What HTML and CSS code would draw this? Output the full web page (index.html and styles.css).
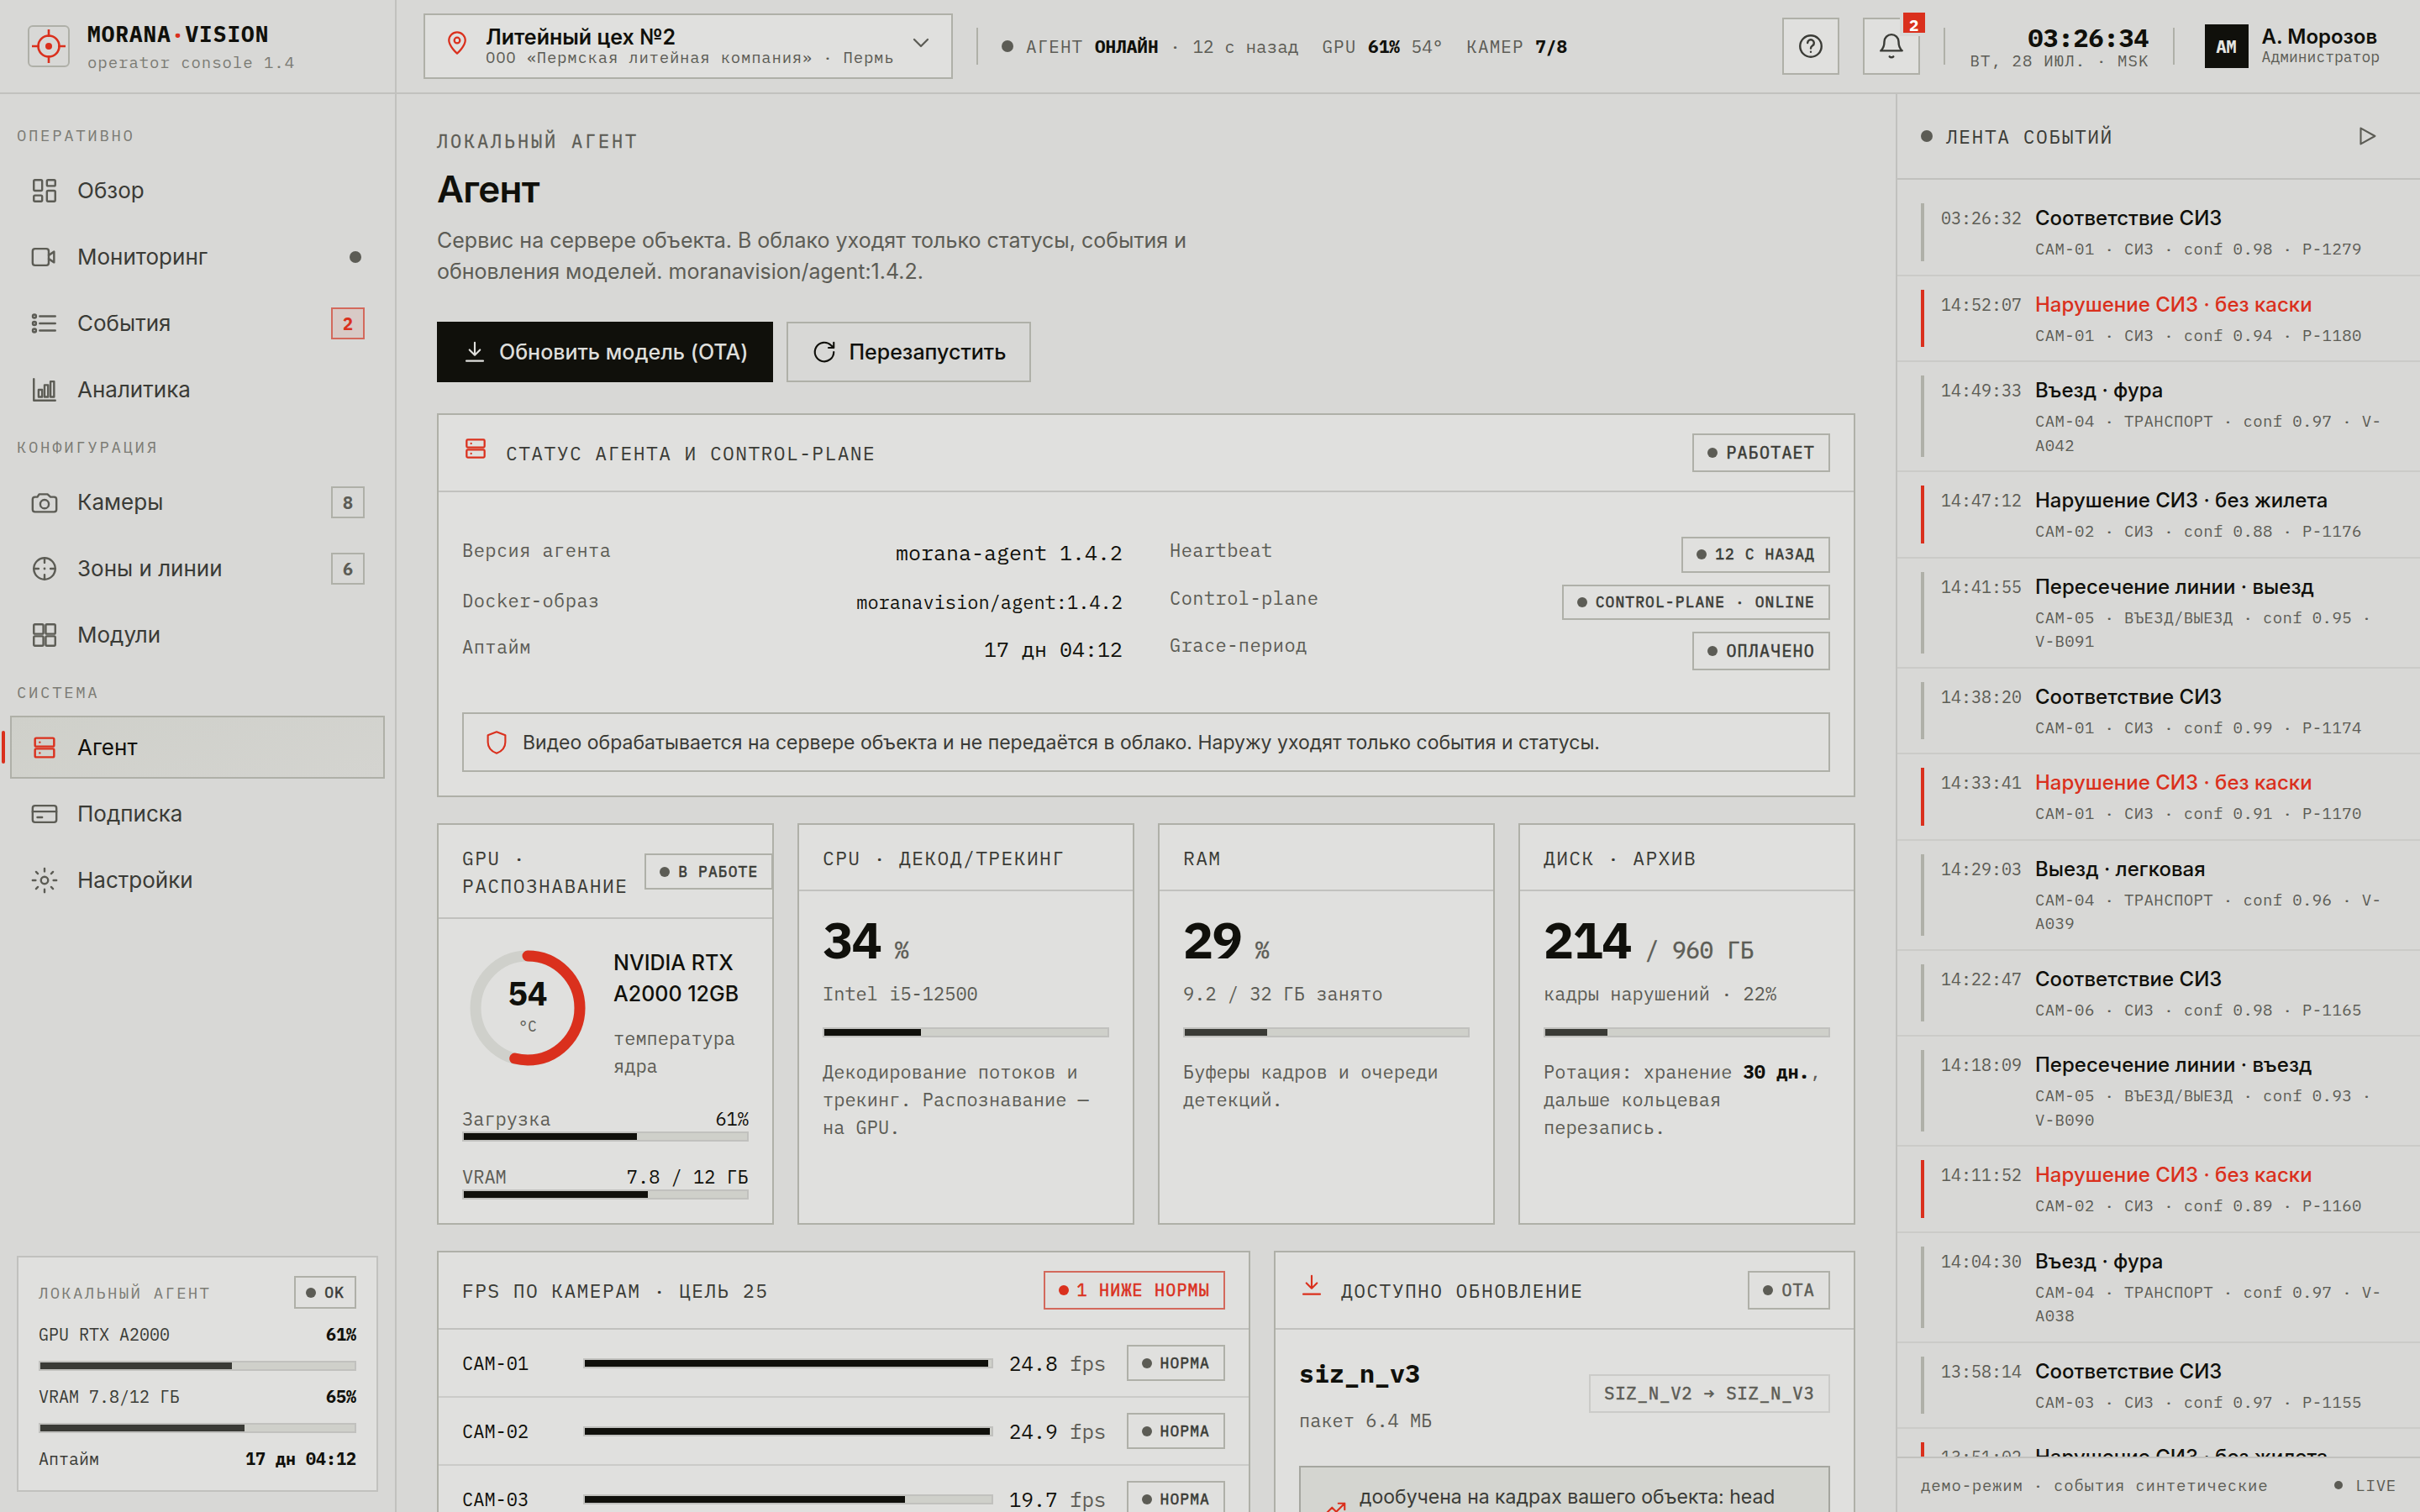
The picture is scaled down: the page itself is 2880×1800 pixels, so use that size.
FILE: index.html
```html
<!DOCTYPE html>
<html lang="ru">
<head>
<meta charset="utf-8">
<title>Morana Vision — Агент</title>
<link rel="stylesheet" href="styles.css">
</head>
<body>
<svg class="sprite" aria-hidden="true">
  <symbol id="i-dash" viewBox="0 0 24 24"><rect x="3" y="3" width="7" height="9" rx="1"/><rect x="14" y="3" width="7" height="5" rx="1"/><rect x="14" y="12" width="7" height="9" rx="1"/><rect x="3" y="16" width="7" height="5" rx="1"/></symbol>
  <symbol id="i-video" viewBox="0 0 24 24"><rect x="2" y="5" width="13.5" height="14" rx="2"/><path d="M15.5 10.5l4.5-3v9l-4.500-3"/></symbol>
  <symbol id="i-list" viewBox="0 0 24 24"><circle cx="3.500" cy="6" r="1.400"/><circle cx="3.500" cy="12" r="1.400"/><circle cx="3.500" cy="18" r="1.400"/><path d="M8 6h13M8 12h13M8 18h13"/></symbol>
  <symbol id="i-chart" viewBox="0 0 24 24"><path d="M3 3v18h18"/><rect x="7" y="12" width="3" height="6"/><rect x="12" y="8" width="3" height="10"/><rect x="17" y="5" width="3" height="13"/></symbol>
  <symbol id="i-camera" viewBox="0 0 24 24"><path d="M4 7.500h2L7.500 5.200h7L17 7.500h3a2 2 0 0 1 2 2V18a2 2 0 0 1-2 2H4a2 2 0 0 1-2-2V9.500a2 2 0 0 1 2-2z"/><circle cx="12" cy="13.500" r="3.600"/></symbol>
  <symbol id="i-target" viewBox="0 0 24 24"><circle cx="12" cy="12" r="9"/><path d="M12 3v4M12 17v4M3 12h4M17 12h4"/><circle class="fill" cx="12" cy="12" r="1"/></symbol>
  <symbol id="i-modules" viewBox="0 0 24 24"><rect x="3" y="3" width="8" height="8" rx="1"/><rect x="13" y="3" width="8" height="8" rx="1"/><rect x="3" y="13" width="8" height="8" rx="1"/><rect x="13" y="13" width="8" height="8" rx="1"/></symbol>
  <symbol id="i-server" viewBox="0 0 24 24"><rect x="4" y="4" width="16" height="7" rx="1"/><rect x="4" y="13" width="16" height="7" rx="1"/><path d="M8 7.500h.01M8 16.500h.01"/></symbol>
  <symbol id="i-card" viewBox="0 0 24 24"><rect x="2" y="5" width="20" height="14" rx="2"/><path d="M2 10h20M6 14.800h4"/></symbol>
  <symbol id="i-gear" viewBox="0 0 24 24"><circle cx="12" cy="12" r="3"/><path d="M12 2v2.500M12 19.500V22M2 12h2.500M19.500 12H22M4.900 4.900l1.500 1.500M17.600 17.600l1.500 1.500M4.900 19.100l1.500-1.500M17.600 6.400l1.500-1.500"/></symbol>
  <symbol id="i-pin" viewBox="0 0 24 24"><path d="M12 21.500s7.300-6.500 7.300-11.700a7.300 7.300 0 0 0-14.600 0c0 5.200 7.300 11.700 7.300 11.700z"/><circle cx="12" cy="9.800" r="2.500"/></symbol>
  <symbol id="i-chev" viewBox="0 0 24 24"><path d="M6 9l6 6 6-6"/></symbol>
  <symbol id="i-help" viewBox="0 0 24 24"><circle cx="12" cy="12" r="9"/><path d="M9.300 9.200a2.700 2.700 0 1 1 4.200 2.300c-1 .7-1.500 1.200-1.500 2.300M12 16.800h.01"/></symbol>
  <symbol id="i-bell" viewBox="0 0 24 24"><path d="M6 8.200a6 6 0 0 1 12 0c0 4.800 1.300 6.300 3 7.600H3c1.700-1.300 3-2.800 3-7.600z"/><path d="M10.400 20.700c.8.9 2.400.9 3.200 0"/></symbol>
  <symbol id="i-download" viewBox="0 0 24 24"><path d="M12 3v12M7 10l5 5 5-5M4 20.500h16"/></symbol>
  <symbol id="i-refresh" viewBox="0 0 24 24"><path d="M21 12a9 9 0 1 1-2.600-6.300L21 8M21 3v5h-5"/></symbol>
  <symbol id="i-shield" viewBox="0 0 24 24"><path d="M12 1.800l8.300 3.200v6.500c0 5-3.300 8.700-8.300 10.700-5-2-8.300-5.700-8.300-10.700V5z"/></symbol>
  <symbol id="i-play" viewBox="0 0 24 24"><path d="M6 4.500l13.500 7.500L6 19.500z"/></symbol>
  <symbol id="i-trend" viewBox="0 0 24 24"><path d="M3 17l6-6 4 4 8-8M15 7h6v6"/></symbol>
</svg>

<div class="app">
  <div class="brand">
    <svg class="logo" viewBox="0 0 52 52"><rect x="2" y="2" width="48" height="48" rx="5"/><circle class="red" cx="26" cy="26" r="12.500"/><path class="red" d="M26 6v9M26 37v9M6 26h9M37 26h9"/><circle class="core" cx="26" cy="26" r="4"/></svg>
    <div>
      <div class="brand-name">MORANA<span>·</span>VISION</div>
      <div class="brand-sub">operator console 1.4</div>
    </div>
  </div>

  <header class="topbar">
    <div class="site">
      <svg class="icon pin"><use href="#i-pin"/></svg>
      <div>
        <div class="site-name">Литейный цех №2</div>
        <div class="site-org">ООО «Пермская литейная компания» · Пермь</div>
      </div>
      <svg class="icon chev"><use href="#i-chev"/></svg>
    </div>
    <i class="vline"></i>
    <div class="health">
      <i class="dot dot-l"></i>
      <div class="stat">АГЕНТ <b>ОНЛАЙН</b> · <em>12 с назад</em></div>
      <div class="stat">GPU <b>61%</b> <em>54°</em></div>
      <div class="stat">КАМЕР <b>7/8</b></div>
    </div>
    <div class="top-right">
      <div class="iconbtn"><svg class="icon"><use href="#i-help"/></svg></div>
      <div class="iconbtn"><svg class="icon"><use href="#i-bell"/></svg><span class="count">2</span></div>
      <i class="vline"></i>
      <div class="clock"><div class="time">03:26:34</div><div class="date">ВТ, 28 ИЮЛ. · MSK</div></div>
      <i class="vline"></i>
      <div class="user">
        <div class="avatar">AM</div>
        <div><div class="user-name">А. Морозов</div><div class="user-role">Администратор</div></div>
      </div>
    </div>
  </header>

  <aside class="sidebar">
    <nav class="nav">
      <div class="nav-label">ОПЕРАТИВНО</div>
      <div class="nav-item"><svg class="icon"><use href="#i-dash"/></svg>Обзор</div>
      <div class="nav-item"><svg class="icon"><use href="#i-video"/></svg>Мониторинг<i class="dot dot-l end"></i></div>
      <div class="nav-item"><svg class="icon"><use href="#i-list"/></svg>События<span class="badge red">2</span></div>
      <div class="nav-item"><svg class="icon"><use href="#i-chart"/></svg>Аналитика</div>
      <div class="nav-label">КОНФИГУРАЦИЯ</div>
      <div class="nav-item"><svg class="icon"><use href="#i-camera"/></svg>Камеры<span class="badge">8</span></div>
      <div class="nav-item"><svg class="icon"><use href="#i-target"/></svg>Зоны и линии<span class="badge">6</span></div>
      <div class="nav-item"><svg class="icon"><use href="#i-modules"/></svg>Модули</div>
      <div class="nav-label">СИСТЕМА</div>
      <div class="nav-item active"><svg class="icon"><use href="#i-server"/></svg>Агент</div>
      <div class="nav-item"><svg class="icon"><use href="#i-card"/></svg>Подписка</div>
      <div class="nav-item"><svg class="icon"><use href="#i-gear"/></svg>Настройки</div>
    </nav>
    <div class="mini">
      <div class="mini-head"><span>ЛОКАЛЬНЫЙ АГЕНТ</span><span class="tag tag-xs"><i class="dot"></i>OK</span></div>
      <div class="mini-row"><span>GPU RTX A2000</span><b>61%</b></div>
      <div class="bar soft"><i style="width:61%"></i></div>
      <div class="mini-row"><span>VRAM 7.8/12 ГБ</span><b>65%</b></div>
      <div class="bar soft"><i style="width:65%"></i></div>
      <div class="mini-row"><span>Аптайм</span><b>17 дн 04:12</b></div>
    </div>
  </aside>

  <main class="main">
    <div class="eyebrow">ЛОКАЛЬНЫЙ АГЕНТ</div>
    <h1>Агент</h1>
    <p class="lead">Сервис на сервере объекта. В облако уходят только статусы, события и<br>обновления моделей. moranavision/agent:1.4.2.</p>
    <div class="actions">
      <div class="btn primary"><svg class="icon"><use href="#i-download"/></svg>Обновить модель (OTA)</div>
      <div class="btn"><svg class="icon"><use href="#i-refresh"/></svg>Перезапустить</div>
    </div>

    <section class="card">
      <div class="card-head">
        <svg class="icon head-server"><use href="#i-server"/></svg>
        <div class="title">СТАТУС АГЕНТА И CONTROL-PLANE</div>
        <span class="tag"><i class="dot"></i>РАБОТАЕТ</span>
      </div>
      <div class="status">
        <dl>
          <div class="kv r1"><dt>Версия агента</dt><dd>morana-agent 1.4.2</dd></div>
          <div class="kv r2"><dt>Docker-образ</dt><dd class="small">moranavision/agent:1.4.2</dd></div>
          <div class="kv r3"><dt>Аптайм</dt><dd>17 дн 04:12</dd></div>
        </dl>
        <dl>
          <div class="kv"><dt>Heartbeat</dt><dd><span class="tag tag-sm"><i class="dot"></i>12 С НАЗАД</span></dd></div>
          <div class="kv"><dt>Control-plane</dt><dd><span class="tag tag-sm"><i class="dot"></i>CONTROL-PLANE · ONLINE</span></dd></div>
          <div class="kv"><dt>Grace-период</dt><dd><span class="tag"><i class="dot"></i>ОПЛАЧЕНО</span></dd></div>
        </dl>
      </div>
      <div class="notice"><svg class="icon"><use href="#i-shield"/></svg>Видео обрабатывается на сервере объекта и не передаётся в облако. Наружу уходят только события и статусы.</div>
    </section>

    <div class="metrics">
      <section class="card">
        <div class="card-head low"><div class="title">GPU · РАСПОЗНАВАНИЕ</div><span class="tag tag-sm"><i class="dot"></i>В РАБОТЕ</span></div>
        <div class="card-body">
          <div class="gpu">
            <div class="gauge">
              <svg viewBox="0 0 156 156"><circle class="ring" cx="78" cy="78" r="62"/><circle class="arc" cx="78" cy="78" r="62" pathLength="100" stroke-dasharray="54 100" transform="rotate(-90 78 78)"/></svg>
              <div class="gauge-text"><b>54</b><span>°C</span></div>
            </div>
            <div class="gpu-info"><div class="gpu-name">NVIDIA RTX A2000 12GB</div><div class="sub">температура ядра</div></div>
          </div>
          <div class="meter"><span>Загрузка</span><b>61%</b></div>
          <div class="bar"><i style="width:61%"></i></div>
          <div class="meter second"><span>VRAM</span><b>7.8 / 12 ГБ</b></div>
          <div class="bar"><i style="width:65%"></i></div>
        </div>
      </section>
      <section class="card">
        <div class="card-head low"><div class="title">CPU · ДЕКОД/ТРЕКИНГ</div></div>
        <div class="card-body">
          <div class="num">34<span> %</span></div>
          <div class="sub">Intel i5-12500</div>
          <div class="bar"><i style="width:34%"></i></div>
          <div class="sub note">Декодирование потоков и трекинг. Распознавание — на GPU.</div>
        </div>
      </section>
      <section class="card">
        <div class="card-head low"><div class="title">RAM</div></div>
        <div class="card-body">
          <div class="num">29<span> %</span></div>
          <div class="sub">9.2 / 32 ГБ занято</div>
          <div class="bar soft"><i style="width:29%"></i></div>
          <div class="sub note">Буферы кадров и очереди детекций.</div>
        </div>
      </section>
      <section class="card">
        <div class="card-head low"><div class="title">ДИСК · АРХИВ</div></div>
        <div class="card-body">
          <div class="num">214<span> / 960 ГБ</span></div>
          <div class="sub">кадры нарушений · 22%</div>
          <div class="bar soft"><i style="width:22%"></i></div>
          <div class="sub note">Ротация: хранение <b>30 дн.</b>, дальше кольцевая перезапись.</div>
        </div>
      </section>
    </div>

    <div class="bottom">
      <section class="card">
        <div class="card-head"><div class="title">FPS ПО КАМЕРАМ · ЦЕЛЬ 25</div><span class="tag alert"><i class="dot"></i>1 НИЖЕ НОРМЫ</span></div>
        <div class="fps"><span>CAM-01</span><div class="bar"><i style="width:99.200%"></i></div><div class="val">24.8 <em>fps</em></div><span class="tag tag-sm"><i class="dot"></i>НОРМА</span></div>
        <div class="fps"><span>CAM-02</span><div class="bar"><i style="width:99.600%"></i></div><div class="val">24.9 <em>fps</em></div><span class="tag tag-sm"><i class="dot"></i>НОРМА</span></div>
        <div class="fps"><span>CAM-03</span><div class="bar"><i style="width:78.800%"></i></div><div class="val">19.7 <em>fps</em></div><span class="tag tag-sm"><i class="dot"></i>НОРМА</span></div>
      </section>
      <section class="card">
        <div class="card-head"><svg class="icon head-dl"><use href="#i-download"/></svg><div class="title">ДОСТУПНО ОБНОВЛЕНИЕ</div><span class="tag muted"><i class="dot"></i>OTA</span></div>
        <div class="card-body">
          <div class="update">
            <div><div class="model">siz_n_v3</div><div class="sub">пакет 6.4 МБ</div></div>
            <span class="tag ghost">SIZ_N_V2 → SIZ_N_V3</span>
          </div>
          <div class="hint"><svg class="icon"><use href="#i-trend"/></svg><div>дообучена на кадрах вашего объекта: head</div></div>
        </div>
      </section>
    </div>
  </main>

  <aside class="feed">
    <div class="feed-head"><i class="dot dot-l"></i><div class="title">ЛЕНТА СОБЫТИЙ</div><div class="play"><svg class="icon"><use href="#i-play"/></svg></div></div>
    <div class="events">
      <div class="ev"><i></i><time>03:26:32</time><div><h4>Соответствие СИЗ</h4><p>CAM-01 · СИЗ · conf 0.98 · P-1279</p></div></div>
      <div class="ev bad hot"><i></i><time>14:52:07</time><div><h4>Нарушение СИЗ · без каски</h4><p>CAM-01 · СИЗ · conf 0.94 · P-1180</p></div></div>
      <div class="ev"><i></i><time>14:49:33</time><div><h4>Въезд · фура</h4><p>CAM-04 · ТРАНСПОРТ · conf 0.97 · V-A042</p></div></div>
      <div class="ev bad"><i></i><time>14:47:12</time><div><h4>Нарушение СИЗ · без жилета</h4><p>CAM-02 · СИЗ · conf 0.88 · P-1176</p></div></div>
      <div class="ev"><i></i><time>14:41:55</time><div><h4>Пересечение линии · выезд</h4><p>CAM-05 · ВЪЕЗД/ВЫЕЗД · conf 0.95 · <span>V-B091</span></p></div></div>
      <div class="ev"><i></i><time>14:38:20</time><div><h4>Соответствие СИЗ</h4><p>CAM-01 · СИЗ · conf 0.99 · P-1174</p></div></div>
      <div class="ev bad hot"><i></i><time>14:33:41</time><div><h4>Нарушение СИЗ · без каски</h4><p>CAM-01 · СИЗ · conf 0.91 · P-1170</p></div></div>
      <div class="ev"><i></i><time>14:29:03</time><div><h4>Выезд · легковая</h4><p>CAM-04 · ТРАНСПОРТ · conf 0.96 · V-A039</p></div></div>
      <div class="ev"><i></i><time>14:22:47</time><div><h4>Соответствие СИЗ</h4><p>CAM-06 · СИЗ · conf 0.98 · P-1165</p></div></div>
      <div class="ev"><i></i><time>14:18:09</time><div><h4>Пересечение линии · въезд</h4><p>CAM-05 · ВЪЕЗД/ВЫЕЗД · conf 0.93 · <span>V-B090</span></p></div></div>
      <div class="ev bad hot"><i></i><time>14:11:52</time><div><h4>Нарушение СИЗ · без каски</h4><p>CAM-02 · СИЗ · conf 0.89 · P-1160</p></div></div>
      <div class="ev"><i></i><time>14:04:30</time><div><h4>Въезд · фура</h4><p>CAM-04 · ТРАНСПОРТ · conf 0.97 · V-A038</p></div></div>
      <div class="ev"><i></i><time>13:58:14</time><div><h4>Соответствие СИЗ</h4><p>CAM-03 · СИЗ · conf 0.97 · P-1155</p></div></div>
      <div class="ev bad"><i></i><time>13:51:02</time><div><h4>Нарушение СИЗ · без жилета</h4></div></div>
    </div>
    <div class="feed-foot"><span>демо-режим · события синтетические</span><i class="dot"></i><span class="live">LIVE</span></div>
  </aside>
</div>
</body>
</html>
```
FILE: styles.css
```css
:root {
  --bg: #d8d8d6;
  --surface: #e0e0de;
  --line: #c1c1be;
  --line-soft: #cbcbc8;
  --edge: #afb0a8;
  --ink: #10100b;
  --ink-2: #3a3b36;
  --ink-3: #5c5c55;
  --ink-4: #7b7b74;
  --red: #da301d;
  --mono: "IBM Plex Mono", "Liberation Mono", monospace;
  --sans: Inter, "Liberation Sans", sans-serif;
}
* { box-sizing: border-box; margin: 0; padding: 0; }
i, em { font-style: normal; }
body { width: 2880px; height: 1800px; overflow: hidden; background: var(--bg); color: var(--ink); font-family: var(--sans); }
.sprite { display: none; }

.app { display: grid; grid-template-columns: 472px 1784px 624px; grid-template-rows: 112px 1688px; }

.icon { width: 34px; height: 34px; flex: none; fill: none; stroke: currentColor; stroke-width: 1.7; stroke-linecap: round; stroke-linejoin: round; }
.fill { fill: currentColor; stroke: none; }
.dot { width: 12px; height: 12px; border-radius: 50%; background: var(--ink-3); flex: none; }
.dot-l { width: 14px; height: 14px; }
.vline { width: 2px; height: 44px; background: var(--edge); flex: none; }

/* brand */
.brand { display: flex; align-items: center; gap: 20px; padding-left: 32px; border-right: 2px solid var(--line); border-bottom: 2px solid var(--line); }
.logo { width: 52px; height: 52px; flex: none; fill: none; stroke-width: 2; stroke: var(--edge); }
.logo .red { stroke: var(--red); stroke-width: 2.6; }
.logo .core { fill: var(--red); stroke: none; }
.brand-name { font: 700 26px/34px var(--mono); letter-spacing: 1.04px; padding-top: 1px; }
.brand-name span { color: var(--red); }
.brand-sub { font: 19px/28px var(--mono); letter-spacing: .95px; color: var(--ink-4); padding-top: 3px; }

/* top bar */
.topbar { grid-column: 2 / 4; display: flex; align-items: center; gap: 28px; padding: 0 48px 0 32px; border-bottom: 2px solid var(--line); }
.site { display: flex; align-items: center; width: 630px; height: 78px; padding: 0 20px 0 22px; border: 2px solid var(--edge); background: var(--surface); }
.pin { width: 32px; height: 32px; margin: 0 18px 8px 0; color: var(--red); }
.site-name { font-weight: 600; font-size: 25px; line-height: 32px; }
.site-org { margin: -3px 0 3px; font: 19px/22px var(--mono); letter-spacing: .76px; color: var(--ink-3); white-space: nowrap; }
.chev { width: 32px; height: 32px; margin: 0 0 8px auto; color: var(--ink-3); }
.health { display: flex; align-items: center; gap: 28px; }
.health .dot { margin-right: -13px; }
.stat { font: 21px/30px var(--mono); letter-spacing: 1.05px; color: var(--ink-3); white-space: nowrap; }
.stat b { letter-spacing: 0; color: var(--ink); }
.stat em { letter-spacing: 0; }
.top-right { display: flex; align-items: center; gap: 28px; margin-left: auto; }
.iconbtn { position: relative; width: 68px; height: 68px; display: grid; place-items: center; border: 2px solid var(--edge); background: var(--surface); color: var(--ink-2); }
.count { position: absolute; top: -12px; right: -12px; width: 34px; height: 32px; border: 4px solid var(--bg); background: var(--red); color: #fff; font: 700 19px/30px var(--mono); text-align: center; }
.clock { width: 215px; text-align: right; padding-top: 1px; }
.time { font: 700 30px/32px var(--mono); padding-top: 1px; }
.date { font: 19px/22px var(--mono); letter-spacing: 1.14px; color: var(--ink-3); }
.user { display: flex; align-items: center; gap: 16px; margin-left: 8px; }
.avatar { width: 52px; height: 52px; background: var(--ink); color: #e6e6e2; font: 700 20px/54px var(--mono); text-align: center; }
.user-name { font-weight: 600; font-size: 24px; line-height: 30px; }
.user-role { margin: -2px 0 2px; font: 18px/22px var(--mono); color: var(--ink-3); }

/* sidebar */
.sidebar { display: flex; flex-direction: column; justify-content: space-between; border-right: 2px solid var(--line); padding-bottom: 24px; }
.nav { display: flex; flex-direction: column; gap: 4px; padding: 22px 12px 0; }
.nav-label { height: 51px; padding: 8px 8px 0; font: 19px/38px var(--mono); letter-spacing: 2.66px; color: var(--ink-4); }
.nav-item { display: flex; align-items: center; gap: 22px; height: 75px; padding: 0 22px; border: 2px solid transparent; font-size: 26px; color: var(--ink-2); }
.nav-item .icon { color: var(--ink-3); }
.nav-item.active { position: relative; color: var(--ink); border-color: var(--edge); background: linear-gradient(160deg, #cfd0ca, #d4d4d0); }
.nav-item.active .icon { color: var(--red); }
.nav-item.active::before { content: ""; position: absolute; left: -12px; top: 16px; width: 4px; height: 39px; border-radius: 2px; background: var(--red); }
.end { margin: 0 4px 0 auto; }
.badge { margin-left: auto; width: 40px; height: 38px; border: 2px solid var(--edge); font: 700 20px/35px var(--mono); text-align: center; color: var(--ink-3); }
.badge.red { border-color: #d3695c; background: #d8cac6; color: var(--red); }

.mini { display: flex; flex-direction: column; gap: 18px; margin: 0 20px; padding: 22px 24px 24px; border: 2px solid var(--line); background: var(--surface); }
.mini-head { display: flex; align-items: center; justify-content: space-between; font: 19px/24px var(--mono); letter-spacing: 2.28px; color: var(--ink-4); }
.mini-row { display: flex; justify-content: space-between; font: 20px/26px var(--mono); color: var(--ink-2); }
.mini-row b { color: var(--ink); }

.bar { height: 12px; border: 2px solid var(--line); background: #cfd0ca; }
.bar i { display: block; height: 8px; background: var(--ink); }
.bar.soft i { background: var(--ink-2); }

.tag { display: inline-flex; align-items: center; gap: 10px; flex: none; height: 46px; padding: 0 16px; border: 2px solid var(--edge); font: 20px/24px var(--mono); -webkit-text-stroke: .6px currentColor; letter-spacing: 1.2px; color: var(--ink-2); white-space: nowrap; }
.tag-sm { height: 42.500px; font-size: 18px; letter-spacing: 1.08px; }
.tag-xs { height: 39px; padding: 0 12px; font-size: 18px; letter-spacing: 1.08px; }
.tag.alert { color: var(--red); border-color: #d3695c; }
.tag.alert .dot { background: var(--red); }
.tag.muted { color: var(--ink-3); }
.tag.ghost { color: var(--ink-3); border-color: var(--line-soft); }

/* main */
.main { height: 1688px; overflow: hidden; padding: 38px 48px 0; }
.eyebrow { font: 22px/36px var(--mono); letter-spacing: 2.8px; color: var(--ink-3); -webkit-text-stroke: .3px currentColor; }
h1 { margin-top: 11px; font-weight: 600; font-size: 44px; line-height: 56px; letter-spacing: -.75px; }
.lead { margin-top: 15px; font-size: 25px; line-height: 36.800px; color: var(--ink-3); }
.actions { display: flex; gap: 16px; margin: 41px 0 37px; }
.btn { display: flex; align-items: center; gap: 14px; height: 72.500px; padding: 0 28px; border: 2px solid var(--edge); font-weight: 500; font-size: 25px; white-space: nowrap; }
.btn .icon { width: 30px; height: 30px; }
.btn.primary { background: var(--ink); border-color: var(--ink); color: #dededb; }

.card { border: 2px solid var(--edge); background: var(--surface); min-width: 0; }
.card-head { display: flex; align-items: center; gap: 20px; padding: 22px 28px; min-height: 92px; border-bottom: 2px solid var(--line); }
.card-head .tag { margin-left: auto; }
.card-head.low { min-height: 79px; padding-bottom: 21px; }
.title { font: 23px/33px var(--mono); letter-spacing: 1.38px; color: var(--ink-2); padding-top: 1px; }
.head-server { width: 32px; height: 32px; margin-bottom: 10px; color: var(--red); }
.head-dl { width: 30px; height: 30px; margin-bottom: 12px; color: var(--red); }
.card-body { padding: 28px; }

.status { display: grid; grid-template-columns: 1fr 1fr; gap: 56px; padding: 53px 28px 50px; }
dl { display: flex; flex-direction: column; gap: 14px; }
.kv { display: flex; justify-content: space-between; align-items: flex-start; }
dt { font: 22px/32px var(--mono); letter-spacing: .44px; color: var(--ink-3); }
dd { display: flex; font: 25px/38px var(--mono); }
dd.small { font-size: 22px; line-height: 35px; }
.r1 { height: 46px; }
.r2 { height: 41px; }
.notice { display: flex; align-items: center; gap: 16px; height: 71px; margin: 0 28px 28px; padding: 0 24px; border: 2px solid var(--edge); font-size: 23px; color: var(--ink-2); white-space: nowrap; }
.notice .icon { width: 30px; height: 30px; color: var(--red); }

.metrics { display: grid; grid-template-columns: repeat(4, 401px); gap: 28px; margin: 31px 0 32px; height: 477px; }
.sub { font: 22px/33px var(--mono); color: var(--ink-3); }
.sub b { color: var(--ink); }
.gpu { display: flex; gap: 24px; height: 197px; }
.gauge { position: relative; width: 156px; height: 156px; flex: none; }
.gauge svg { display: block; width: 156px; height: 156px; fill: none; stroke-width: 13; }
.ring { stroke: #cfd0cb; }
.arc { stroke: var(--red); stroke-linecap: round; }
.gauge-text { position: absolute; inset: 0; display: flex; flex-direction: column; align-items: center; justify-content: center; }
.gauge-text b { font: 700 39px/44px var(--mono); }
.gauge-text span { font: 18px/28px var(--mono); color: var(--ink-3); padding: 3px 0 4px; }
.gpu-name { padding-top: 6px; font-weight: 500; font-size: 25px; line-height: 37px; }
.gpu-info .sub { padding-top: 17px; }
.meter { display: flex; justify-content: space-between; font: 22px/26px var(--mono); padding-bottom: 2px; color: var(--ink-3); }
.meter b { font-weight: 400; color: var(--ink); }
.meter.second { margin-top: 29px; }
.num { height: 68px; font: 700 60px/60px var(--mono); letter-spacing: -1.2px; white-space: nowrap; }
.num span { font-weight: 400; font-size: 28px; line-height: 1; letter-spacing: -.6px; color: var(--ink-3); -webkit-text-stroke: .5px currentColor; }
.num + .sub { padding-top: 9px; }
.sub + .bar { margin-top: 24px; }
.note { padding-top: 24px; }

.bottom { display: grid; grid-template-columns: 968px 692px; gap: 28px; height: 520px; }
.fps { display: grid; grid-template-columns: 144px 488px 19px 116px auto; align-items: center; height: 81px; padding: 0 28px; border-bottom: 2px solid var(--line-soft); font: 22px/30px var(--mono); }
.fps .val { grid-column: 4; font-size: 24px; white-space: nowrap; }
.fps .val em { color: var(--ink-3); }
.fps .tag { justify-self: end; }
.update { display: flex; align-items: center; justify-content: space-between; }
.model { font: 700 30px/47px var(--mono); }
.model + .sub { padding-top: 16px; }
.hint { display: flex; align-items: flex-start; gap: 14px; margin-top: 38px; height: 160px; padding: 17px 26px; border: 2px solid #a5a69f; background: #d4d5d0; color: var(--ink-2); font-size: 23px; line-height: 36px; white-space: nowrap; }
.hint .icon { width: 30px; height: 30px; margin-top: 17px; color: var(--red); }

/* event feed */
.feed { display: flex; flex-direction: column; height: 1688px; border-left: 2px solid var(--line); }
.feed-head { display: flex; align-items: center; gap: 16px; height: 102px; padding: 0 28px; border-bottom: 2px solid var(--line); flex: none; }
.feed-head .title { letter-spacing: 1.5px; }
.play { margin-left: auto; width: 70px; display: grid; place-items: center; color: var(--ink-3); }
.play .icon { width: 30px; height: 30px; }
.events { flex: 1; min-height: 0; overflow: hidden; padding-top: 12px; }
.ev { display: grid; grid-template-columns: 4px 96px 1fr; padding: 16px 28px; border-bottom: 2px solid var(--line-soft); }
.ev > i { background: var(--edge); }
.ev time { margin-left: 20px; font: 20px/36px var(--mono); color: var(--ink-3); }
.ev > div { margin-left: 36px; }
.ev h4 { font-weight: 500; font-size: 24px; line-height: 36px; }
.ev p { padding-top: 4px; font: 19px/28.500px var(--mono); letter-spacing: .38px; color: var(--ink-3); }
.ev.bad > i { background: var(--red); }
.ev.hot h4 { color: var(--red); }
.feed-foot { display: flex; align-items: center; height: 66px; padding: 0 28px; border-top: 2px solid var(--line); font: 19px/28px var(--mono); letter-spacing: .76px; color: var(--ink-3); flex: none; }
.feed-foot .dot { width: 10px; height: 10px; margin: 0 15px 0 auto; }
```
